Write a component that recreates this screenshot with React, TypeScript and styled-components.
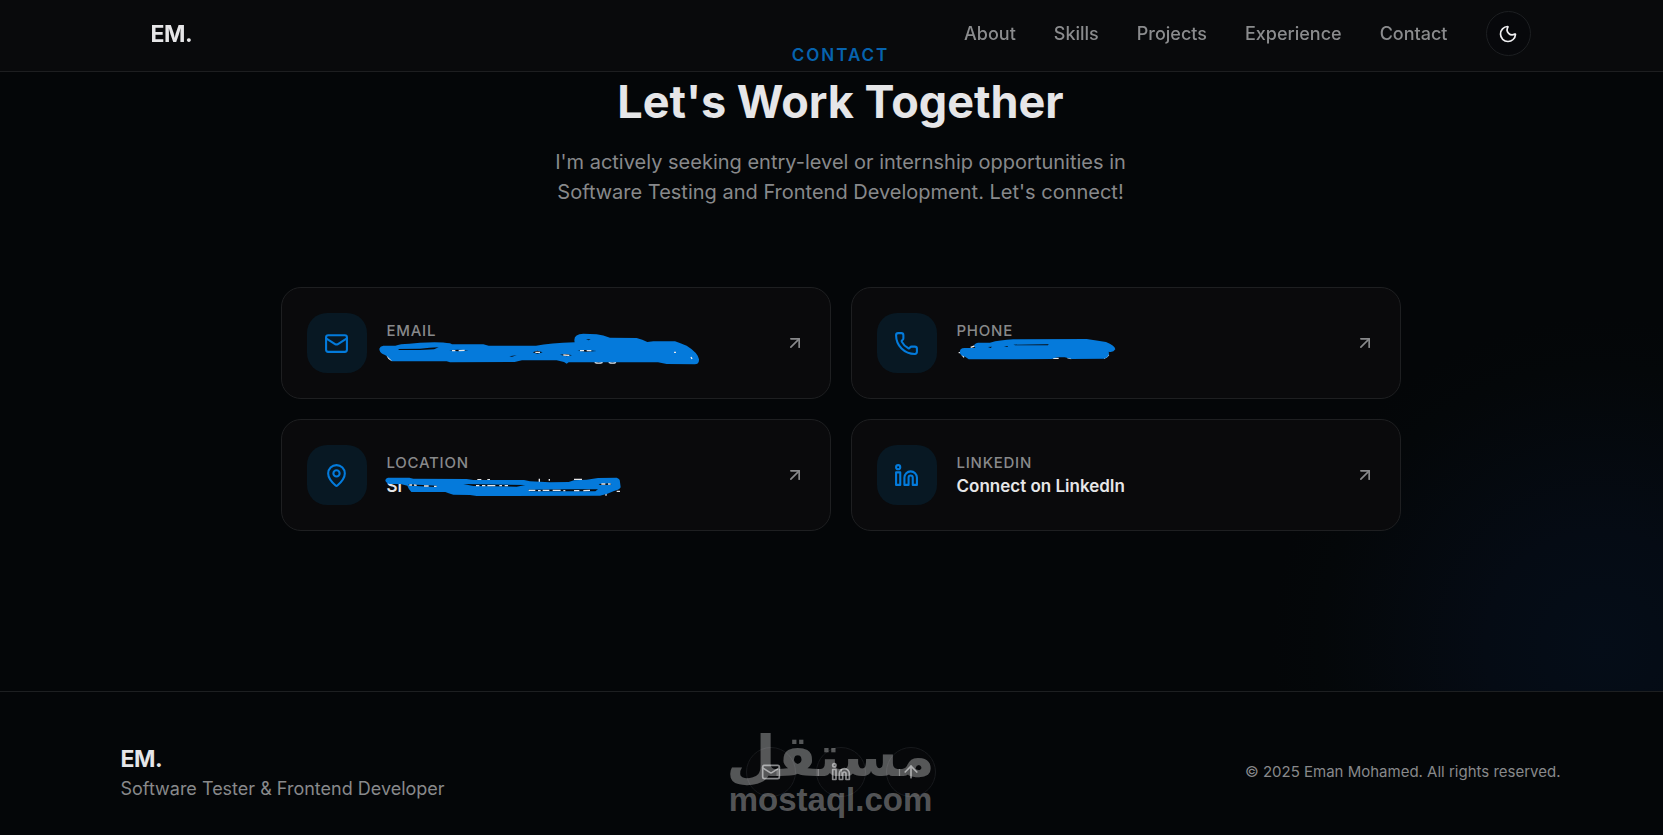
import React from "react";
import styled, { createGlobalStyle } from "styled-components";
import { ArrowUp, ArrowUpRight, Linkedin, Mail, MapPin, Moon, Phone } from "lucide-react";

const GlobalStyle = createGlobalStyle`
  *, *::before, *::after { box-sizing: border-box; }
  body {
    margin: 0;
    background: #040608;
    color: #e6e6e8;
    font-family: Inter, "Liberation Sans", sans-serif;
    overflow-x: hidden;
  }
  a { color: inherit; text-decoration: none; }
  h1, h2, h3, p { margin: 0; }
`;

const Page = styled.div`
  position: relative;
  display: flex;
  flex-direction: column;
  min-height: 100vh;
  margin-right: -18px;
`;

const Header = styled.header`
  position: fixed;
  top: 0;
  left: 0;
  right: -18px;
  z-index: 10;
  height: 72px;
  padding: 11px 30px 0;
  border-bottom: 1px solid #1d1e20;
  background: rgba(26, 24, 24, 0.24);
`;

const HeaderInner = styled.div`
  display: flex;
  align-items: center;
  justify-content: space-between;
  max-width: 1380px;
  margin: 0 auto;
`;

const Brand = styled.a<{ $block?: boolean }>`
  display: ${(p) => (p.$block ? "block" : "inline")};
  font-size: 23px;
  line-height: 34px;
  font-weight: 700;
  letter-spacing: -0.02em;
`;

const Nav = styled.nav`
  display: flex;
  align-items: center;
  gap: 38px;
`;

const NavLink = styled.a`
  font-size: 18px;
  line-height: 24px;
  font-weight: 500;
  color: #8b8c8e;
`;

const RoundButton = styled.button`
  display: grid;
  place-items: center;
  width: 45px;
  height: 45px;
  padding: 0;
  border: 1px solid #1d1f22;
  border-radius: 50%;
  background: #07080b;
  color: #f0f0f2;
`;

const Contact = styled.main`
  flex: 1;
  padding: 42px 30px 160px;
  background: radial-gradient(circle 330px at calc(100% - 80px) calc(100% - 44px), #050d18 0%, #050b14 35%, #040709 85%, #040608 100%);
`;

const Intro = styled.section`
  display: flex;
  flex-direction: column;
  align-items: center;
  text-align: center;
  margin-bottom: 80px;
`;

const Eyebrow = styled.p`
  font-size: 17px;
  line-height: 26px;
  font-weight: 600;
  letter-spacing: 2px;
  color: #007bdd;
`;

const Title = styled.h2`
  margin-top: 7px;
  font-size: 45px;
  line-height: 54px;
  font-weight: 700;
`;

const Lead = styled.p`
  max-width: 600px;
  margin-top: 18px;
  font-size: 20px;
  line-height: 30px;
  color: #88898b;
`;

const CardGrid = styled.section`
  display: grid;
  grid-template-columns: 1fr 1fr;
  gap: 20px;
  max-width: 1120px;
  margin: 0 auto;
`;

const Card = styled.a`
  display: flex;
  align-items: center;
  gap: 20px;
  padding: 25px;
  border: 1px solid #1e1f21;
  border-radius: 20px;
  background: #0a0a0c;
`;

const CardIcon = styled.span`
  display: grid;
  place-items: center;
  flex: none;
  width: 60px;
  height: 60px;
  border-radius: 20px;
  background: #081823;
  color: #037bdc;
`;

const CardText = styled.span`
  display: flex;
  flex: 1;
  flex-direction: column;
  gap: 2px;
`;

const CardLabel = styled.span`
  font-size: 15px;
  line-height: 21px;
  font-weight: 500;
  letter-spacing: 0.05em;
  color: #88898b;
`;

const CardValue = styled.span`
  position: relative;
  min-height: 23px;
  font-size: 17px;
  line-height: 23px;
  font-weight: 600;
`;

const CardArrow = styled.span`
  display: grid;
  color: #88898b;
`;

const Marker = styled.svg`
  position: absolute;
  left: -17px;
  top: -23px;
  width: 340px;
  height: 60px;
  .ink { fill: #057adb; }
  .gap { fill: #0a0a0c; }
  .speck { fill: none; stroke: #e8e8ea; stroke-width: 4; }
`;

const Footer = styled.footer`
  position: relative;
  padding: 50px 30px 33px;
  border-top: 1px solid #1d1f21;
  background: #040608;
`;

const FooterInner = styled.div`
  display: grid;
  grid-template-columns: 1fr auto 1fr;
  align-items: center;
  max-width: 1440px;
  margin: 0 auto;
`;

const Tagline = styled.p`
  font-size: 18px;
  line-height: 26px;
  color: #88898b;
`;

const Copyright = styled.p`
  font-size: 15px;
  line-height: 24px;
  text-align: right;
  color: #88898b;
`;

const Socials = styled.div`
  display: flex;
  gap: 20px;
`;

const Social = styled.a`
  display: grid;
  place-items: center;
  width: 50px;
  height: 50px;
  border: 1px solid #17191c;
  border-radius: 50%;
  background: #07080a;
  color: #88898b;
`;

const Watermark = styled.div`
  position: absolute;
  left: 50%;
  top: 37px;
  display: flex;
  flex-direction: column;
  align-items: center;
  transform: translateX(-50%);
  margin-left: -10px;
  color: rgba(255, 255, 255, 0.32);
  font-weight: 700;
  pointer-events: none;
`;

const WatermarkArabic = styled.span`
  font-family: "DejaVu Sans", sans-serif;
  font-size: 57px;
  line-height: 54px;
`;

const WatermarkLatin = styled.span`
  font-family: "Liberation Sans", sans-serif;
  font-size: 33px;
  line-height: 34px;
`;

const EmailMarker = () => (
  <Marker viewBox="0 0 1020 180" aria-hidden="true">
    <path className="speck" d="M52 108 Q56 118 66 122 M674 127 Q686 132 698 127 M716 127 Q728 132 738 127" />
    <path
      className="ink"
      d="M40 77 L76 77 Q90 71 118 71 L150 68 Q210 64 240 70 L246 73 L340 73 L356 77 L498 77 Q540 70 614 67 Q608 42 640 41 L680 43 Q700 46 720 53 L800 54 Q818 58 832 66 L850 64 L915 64 Q932 70 950 77 Q984 98 987 118 Q988 132 974 133 L890 132 L864 127 L596 127 L590 131 L582 126 L560 121 L456 121 L434 126 L240 127 L230 124 L66 124 Q52 106 38 102 Q28 96 28 86 Q30 79 40 77 Z"
    />
    <path className="gap" d="M84 87 L150 86 Q180 83 206 82 L192 88 L150 90 L88 90 Z M648 58 L662 58 L656 61 Z M418 109 L440 106 L426 110 Z M238 91 L262 89 L296 91 L264 94 Z M488 97 L502 92 L518 97 L502 101 Z M570 104 L590 102 L606 106 L590 109 Z M622 92 L648 90 L680 93 L650 95 Z" />
    <path className="speck" d="M246 92 L256 92 M266 92 L284 91 M496 97 L510 97 M580 105 L598 106 M630 92 L642 92 M650 92 L664 92 M912 97 L918 97 M963 111 L966 117" />
  </Marker>
);

const PhoneMarker = () => (
  <Marker viewBox="-30 0 1020 180" aria-hidden="true">
    <path className="speck" d="M26 98 L34 98 M36 104 L42 112 M62 82 L74 78 M308 115 L326 115 M352 113 L364 116 M462 115 Q472 112 476 104" />
    <path
      className="ink"
      d="M44 84 L76 84 Q66 72 84 68 L120 68 Q150 60 190 58 L410 57 Q440 62 468 66 Q494 76 496 88 Q490 98 476 95 Q480 112 462 116 L366 117 L344 112 L322 112 L304 117 L56 118 Q48 110 34 106 Q26 98 32 88 Q36 84 44 84 Z"
    />
    <path className="gap" d="M190 74 L296 73 L294 76 L196 76 Z M114 81 L126 80 L122 84 Z M162 79 L174 78 L172 81 Z" />
  </Marker>
);

const LocationMarker = () => (
  <Marker viewBox="0 0 1020 180" aria-hidden="true">
    <path className="speck" d="M322 83 L334 83 M352 83 L360 83 M508 80 L508 92 M538 81 L538 86 M612 82 L636 82 M708 122 L708 131 M740 118 L750 118" />
    <path
      className="ink"
      d="M54 77 L118 77 L130 80 L290 81 L310 84 L462 84 L480 88 L540 91 L596 90 L612 85 L650 83 L684 78 L740 77 Q750 80 750 90 L752 106 Q748 114 732 117 L712 125 L690 131 L320 132 L300 129 L250 128 Q234 124 226 120 L124 120 Q116 112 112 101 L92 96 L58 96 Q46 92 46 84 Q48 78 54 77 Z"
    />
    <path className="gap" d="M280 96 L466 99 L440 104 L310 102 Z M474 113 L600 112 L684 112 L676 118 L480 118 Z M686 96 L722 94 L724 98 L690 99 Z M114 97 L200 101 L200 105 L122 101 Z" />
    <path className="speck" d="M118 99 L126 99 M132 99 L140 100 M162 102 L176 102 M192 103 L200 103 M318 101 L328 101 M336 101 L346 101 M352 101 L376 101 M388 101 L396 101 M404 101 L414 101 M476 115 L496 115 M504 116 L512 116 M518 115 L538 115 M548 115 L572 115 M580 116 L586 116 M612 116 L628 116 M640 116 L660 115 M694 96 L706 96 M714 96 L722 96" />
  </Marker>
);

const cards = [
  { label: "EMAIL", icon: Mail, marker: <EmailMarker /> },
  { label: "PHONE", icon: Phone, marker: <PhoneMarker /> },
  { label: "LOCATION", icon: MapPin, value: "Si", marker: <LocationMarker /> },
  { label: "LINKEDIN", icon: Linkedin, value: "Connect on LinkedIn" },
];

const links = ["About", "Skills", "Projects", "Experience", "Contact"];

export default function App() {
  return (
    <Page>
      <GlobalStyle />
      <Header>
        <HeaderInner>
          <Brand href="#top">EM.</Brand>
          <Nav>
            {links.map((link) => (
              <NavLink key={link} href={`#${link.toLowerCase()}`}>
                {link}
              </NavLink>
            ))}
            <RoundButton type="button" aria-label="Toggle theme">
              <Moon size={20} />
            </RoundButton>
          </Nav>
        </HeaderInner>
      </Header>

      <Contact id="contact">
        <Intro>
          <Eyebrow>CONTACT</Eyebrow>
          <Title>Let's Work Together</Title>
          <Lead>
            I'm actively seeking entry-level or internship opportunities in Software Testing and Frontend
            Development. Let's connect!
          </Lead>
        </Intro>
        <CardGrid>
          {cards.map(({ label, icon: Icon, value, marker }) => (
            <Card key={label} href={`#${label.toLowerCase()}`}>
              <CardIcon>
                <Icon size={25} />
              </CardIcon>
              <CardText>
                <CardLabel>{label}</CardLabel>
                <CardValue>
                  {value}
                  {marker}
                </CardValue>
              </CardText>
              <CardArrow>
                <ArrowUpRight size={20} />
              </CardArrow>
            </Card>
          ))}
        </CardGrid>
      </Contact>

      <Footer>
        <FooterInner>
          <div>
            <Brand $block href="#top">
              EM.
            </Brand>
            <Tagline>Software Tester &amp; Frontend Developer</Tagline>
          </div>
          <Socials>
            <Social href="#email" aria-label="Email">
              <Mail size={20} />
            </Social>
            <Social href="#linkedin" aria-label="LinkedIn">
              <Linkedin size={20} />
            </Social>
            <Social href="#top" aria-label="Back to top">
              <ArrowUp size={20} />
            </Social>
          </Socials>
          <Copyright>© 2025 Eman Mohamed. All rights reserved.</Copyright>
        </FooterInner>
        <Watermark>
          <WatermarkArabic lang="ar" dir="rtl">
            مستقل
          </WatermarkArabic>
          <WatermarkLatin>mostaql.com</WatermarkLatin>
        </Watermark>
      </Footer>
    </Page>
  );
}
